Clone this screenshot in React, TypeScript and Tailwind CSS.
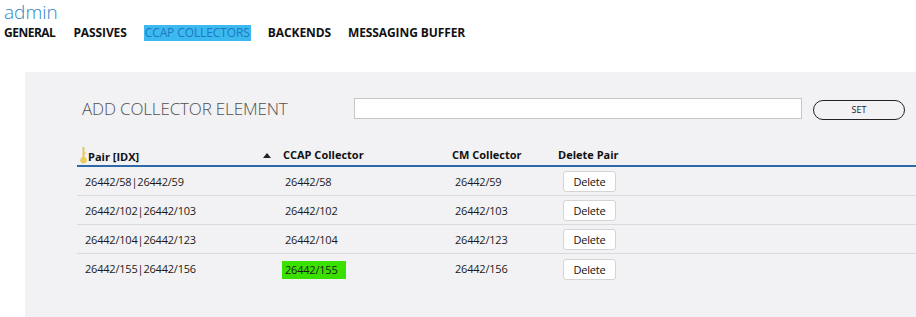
import React from "react";

const rows = [
  { pair: "26442/58|26442/59", ccap: "26442/58", cm: "26442/59", hl: false },
  { pair: "26442/102|26442/103", ccap: "26442/102", cm: "26442/103", hl: false },
  { pair: "26442/104|26442/123", ccap: "26442/104", cm: "26442/123", hl: false },
  { pair: "26442/155|26442/156", ccap: "26442/155", cm: "26442/156", hl: true },
];

function KeyIcon() {
  return (
    <svg width="7" height="17" viewBox="0 0 7 17" className="shrink-0">
      <rect x="2.6" y="0" width="1.8" height="11" fill="#e5c54a" />
      <rect x="4.2" y="5.5" width="1.6" height="1.4" fill="#e5c54a" />
      <circle cx="3.5" cy="13.3" r="3.2" fill="#e9cd5c" />
    </svg>
  );
}

function SortUp() {
  return (
    <svg width="8" height="5" viewBox="0 0 8 5" className="shrink-0">
      <polygon points="4,0 8,5 0,5" fill="#222" />
    </svg>
  );
}

export default function App() {
  return (
    <div
      className="w-[916px] h-[317px] bg-white overflow-hidden flex flex-col"
      style={{ fontFamily: '"Open Sans", "Noto Sans", sans-serif' }}
    >
      <div className="pl-[4px] pt-[1px] text-[19px] leading-[22px] font-light text-[#2f86c4]">admin</div>
      <div className="flex items-center gap-[17px] pl-[4px] mt-[2px] h-[16px] text-[12px] font-bold text-[#111] tracking-[-0.1px]">
        <span className="tracking-[-0.5px] mr-[1px]">GENERAL</span>
        <span>PASSIVES</span>
        <span className="bg-[#3cb9ef] text-[#1e78be] font-normal px-[1px] leading-[16px]">CCAP COLLECTORS</span>
        <span>BACKENDS</span>
        <span>MESSAGING BUFFER</span>
      </div>
      <div className="ml-[25px] mt-[31px] flex-1 bg-[#f2f2f4] flex flex-col">
        <div className="flex items-center pt-[26px] h-[47px]">
          <div className="pl-[57px] w-[329px] text-[17px] font-light text-[#505050] leading-[20px] tracking-[-0.15px]">
            ADD COLLECTOR ELEMENT
          </div>
          <div className="w-[448px] h-[21px] bg-white border border-[#c6c6c6]" />
          <button className="ml-[11px] mt-[2px] w-[92px] h-[20px] rounded-full border border-[#222] bg-[#f2f2f4] text-[9px] text-[#222] leading-none">
            SET
          </button>
        </div>
        <div className="ml-[52px] mt-[26px]">
          <div className="grid grid-cols-[180px_190px_106px_1fr] h-[22px] items-center border-b-2 border-[#2a6aa6] text-[11px] font-bold text-[#111]">
            <div className="flex items-end gap-[1px] pl-[3px]">
              <KeyIcon />
              <span className="leading-[14px]">Pair [IDX]</span>
            </div>
            <div className="flex items-center gap-[12px] pl-[6px]">
              <SortUp />
              <span>CCAP Collector</span>
            </div>
            <div className="pl-[5px]">CM Collector</div>
            <div className="pl-[5px]">Delete Pair</div>
          </div>
          {rows.map((r, i) => (
            <div
              key={i}
              className={`grid grid-cols-[180px_190px_106px_1fr] items-center h-[29px] text-[11px] tracking-[-0.2px] text-[#1a1a1a] ${
                i < rows.length - 1 ? "border-b border-[#dadadc]" : ""
              }`}
            >
              <div className="pl-[8px] pt-[2px]">{r.pair}</div>
              <div className="pl-[28px] pt-[2px]">
                {r.hl ? (
                  <span className="inline-block bg-[#3ae000] pl-[3px] pr-[8px] leading-[18px] ml-[-3px]">{r.ccap}</span>
                ) : (
                  <span>{r.ccap}</span>
                )}
              </div>
              <div className="pl-[8px] pt-[2px]">{r.cm}</div>
              <div className="pl-[10px] pt-[1px]">
                <button className="w-[53px] h-[21px] bg-white border border-[#d4d4d4] rounded-[3px] text-[11px] text-[#111] leading-none">
                  Delete
                </button>
              </div>
            </div>
          ))}
        </div>
      </div>
    </div>
  );
}
